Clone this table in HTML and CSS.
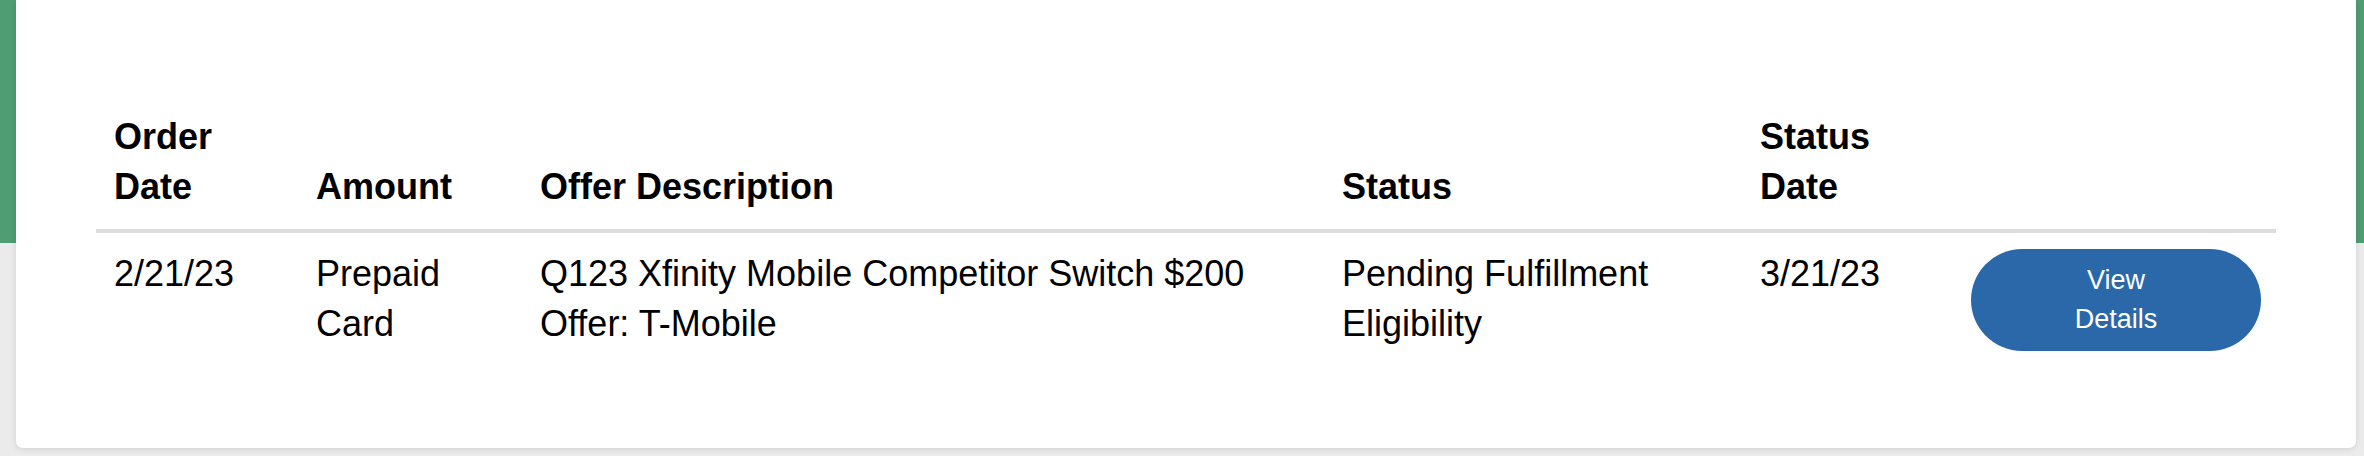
FILE: index.html
```html
<!DOCTYPE html>
<html lang="en">
<head>
<meta charset="utf-8">
<title>Orders</title>
<link rel="stylesheet" href="styles.css">
</head>
<body>
<div class="page">
  <div class="card">
    <table class="orders">
      <colgroup>
        <col class="c-date">
        <col class="c-amount">
        <col class="c-offer">
        <col class="c-status">
        <col class="c-sdate">
        <col class="c-action">
      </colgroup>
      <thead>
        <tr>
          <th>Order Date</th>
          <th>Amount</th>
          <th>Offer Description</th>
          <th>Status</th>
          <th>Status Date</th>
          <th></th>
        </tr>
      </thead>
      <tbody>
        <tr>
          <td>2/21/23</td>
          <td>Prepaid Card</td>
          <td>Q123 Xfinity Mobile Competitor Switch $200 Offer: T-Mobile</td>
          <td>Pending Fulfillment Eligibility</td>
          <td>3/21/23</td>
          <td><button class="details-btn" type="button">View Details</button></td>
        </tr>
      </tbody>
    </table>
  </div>
</div>
</body>
</html>
```

FILE: styles.css
```css
html, body {
  margin: 0;
  padding: 0;
}

body {
  font-family: "Liberation Sans", Arial, Helvetica, sans-serif;
  color: #000;
  background: #e6e6e6;
}

.page {
  height: 456px;
  background: linear-gradient(to bottom, #4f9d73 0, #4f9d73 243px, #ebebeb 243px, #ebebeb 100%);
  padding: 0 8px 0 16px;
  box-sizing: border-box;
  overflow: hidden;
}

.card {
  background: #fff;
  height: 448px;
  box-sizing: border-box;
  padding: 94px 80px 0;
  border-radius: 0 0 7px 7px;
  box-shadow: 0 1px 6px rgba(0, 0, 0, 0.12);
}

.orders {
  width: 2180px;
  table-layout: fixed;
  border-collapse: collapse;
  font-size: 36px;
  line-height: 49.5px;
}

.c-date { width: 202px; }
.c-amount { width: 224px; }
.c-offer { width: 802px; }
.c-status { width: 418px; }
.c-sdate { width: 211px; }
.c-action { width: 323px; }

.orders th {
  text-align: left;
  font-weight: 700;
  vertical-align: bottom;
  padding: 18px 18px 18px 18px;
  border-bottom: 4px solid #dcdcdc;
}

.orders td {
  vertical-align: top;
  padding: 16px 18px;
  font-weight: 400;
}

.details-btn {
  display: block;
  width: 290px;
  height: 102px;
  padding: 12px 85px;
  box-sizing: border-box;
  border: 0;
  border-radius: 51px;
  background: #2b68aa;
  color: #fff;
  font-family: "Liberation Sans", Arial, Helvetica, sans-serif;
  font-size: 27px;
  line-height: 39px;
  text-align: center;
}
```
